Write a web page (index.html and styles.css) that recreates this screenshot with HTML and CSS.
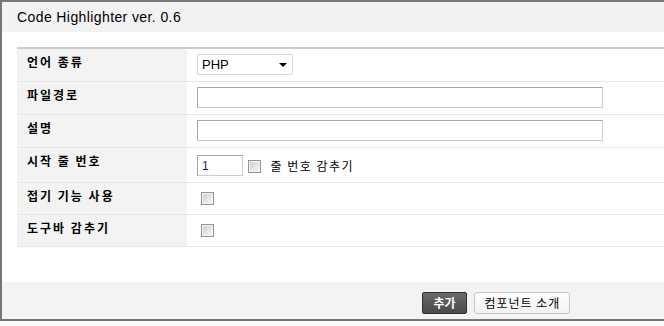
FILE: index.html
```
<!DOCTYPE html>
<html>
<head>
    <title>Code Highlighter</title>
    <link rel="stylesheet" href="styles.css">
</head>
<body>
    <div class="window">
        <div class="window-title">Code Highlighter ver. 0.6</div>

        <div class="window-body">
            <table class="form-table">
                <tr class="row-select">
                    <th>언어 종류</th>
                    <td>
                        <span class="select-box">
                            <select class="lang-select">
                                <option>PHP</option>
                                <option>JavaScript</option>
                                <option>HTML</option>
                            </select>
                        </span>
                    </td>
                </tr>
                <tr>
                    <th>파일경로</th>
                    <td><input type="text" class="text-field wide"></td>
                </tr>
                <tr>
                    <th>설명</th>
                    <td><input type="text" class="text-field wide"></td>
                </tr>
                <tr class="row-line">
                    <th>시작 줄 번호</th>
                    <td>
                        <input type="text" class="text-field short" value="1">
                        <label class="check-label"><input type="checkbox" class="check"> 줄 번호 감추기</label>
                    </td>
                </tr>
                <tr class="row-check">
                    <th>접기 기능 사용</th>
                    <td><input type="checkbox" class="check"></td>
                </tr>
                <tr class="row-check">
                    <th>도구바 감추기</th>
                    <td><input type="checkbox" class="check"></td>
                </tr>
            </table>
        </div>

        <div class="window-footer">
            <button class="btn btn-dark">추가</button>
            <button class="btn btn-light">컴포넌트 소개</button>
        </div>
    </div>
</body>
</html>
```

FILE: styles.css
```
body {
    margin: 0;
    background-color: #ffffff;
    font-family: "Liberation Sans", "Noto Sans CJK KR", sans-serif;
    font-size: 12px;
    color: #000000;
}

.window {
    border-top: 2px solid #767676;
    border-left: 2px solid #767676;
    border-bottom: 2px solid #767676;
    background-color: #ffffff;
}

.window-title {
    height: 30px;
    line-height: 30px;
    padding-left: 15px;
    background-color: #f2f2f2;
    font-size: 14px;
    letter-spacing: 0.4px;
}

.window-body {
    padding: 15px 0 35px 15px;
}

.form-table {
    width: 100%;
    border-collapse: collapse;
    border-top: 2px solid #cccccc;
}

.form-table th,
.form-table td {
    border-bottom: 1px solid #e6e6e6;
    vertical-align: top;
    text-align: left;
    padding: 5px 10px 6px 10px;
}

.form-table th {
    width: 150px;
    background-color: #f3f3f3;
    font-family: "Noto Sans CJK KR", sans-serif;
    font-weight: bold;
    font-size: 12px;
    line-height: 14px;
    padding-top: 6px;
    letter-spacing: 2px;
}

.row-line td {
    padding-top: 7px;
    padding-bottom: 6px;
}

.row-check td {
    padding-top: 6px;
    padding-bottom: 5px;
}

.select-box {
    position: relative;
    display: inline-block;
}

.select-box::after {
    content: "";
    position: absolute;
    right: 6px;
    top: 9px;
    border-left: 4px solid transparent;
    border-right: 4px solid transparent;
    border-top: 4px solid #000000;
}

.lang-select {
    -webkit-appearance: none;
    appearance: none;
    display: block;
    width: 96px;
    height: 21px;
    padding: 0 0 0 4px;
    border: 1px solid #d8d8d8;
    border-radius: 2px;
    background-color: #ffffff;
    font-family: "Liberation Sans", sans-serif;
    font-size: 13px;
    color: #000000;
    outline: none;
}

.text-field {
    display: inline-block;
    vertical-align: middle;
    box-sizing: border-box;
    height: 21px;
    margin: 0;
    padding: 0 4px;
    border: 1px solid #cccccc;
    border-top-color: #a6a6a6;
    border-left-color: #a6a6a6;
    font-family: "Liberation Sans", sans-serif;
    font-size: 12px;
    color: #2a1e5c;
    outline: none;
}

.text-field.wide {
    width: 406px;
}

.text-field.short {
    width: 46px;
}

.check-label {
    display: inline-block;
    vertical-align: middle;
    margin-left: 2px;
    font-family: "Noto Sans CJK KR", sans-serif;
    font-size: 12px;
    letter-spacing: 1.5px;
}

.check {
    -webkit-appearance: none;
    appearance: none;
    display: inline-block;
    vertical-align: -2px;
    width: 13px;
    height: 13px;
    margin: 3px 4px 3px 4px;
    border: 1px solid #939393;
    box-shadow: inset 0 0 0 1px #f4f4f4;
    background: linear-gradient(135deg, #c9c9c9 0%, #e6e6e6 55%, #f7f7f7 100%);
}

.check-label .check {
    margin: 0 5px 0 0;
}

.window-footer {
    height: 37px;
    box-sizing: border-box;
    padding-top: 10px;
    padding-left: 420px;
    background-color: #f3f3f3;
}

.btn {
    height: 22px;
    margin: 0 2px 0 0;
    padding: 0 8px;
    vertical-align: top;
    font-family: "Noto Sans CJK KR", sans-serif;
    font-size: 12px;
    line-height: 20px;
    cursor: pointer;
}

.btn-dark {
    width: 45px;
    border: 1px solid #303030;
    border-radius: 2px;
    background: linear-gradient(#6a6a6a, #4a4a4a);
    color: #ffffff;
    font-weight: bold;
}

.btn-light {
    width: 96px;
    margin-left: 2px;
    border: 1px solid #c4c4c4;
    border-radius: 3px;
    background: linear-gradient(#ffffff, #f2f2f2);
    color: #000000;
    letter-spacing: 1px;
}
```
